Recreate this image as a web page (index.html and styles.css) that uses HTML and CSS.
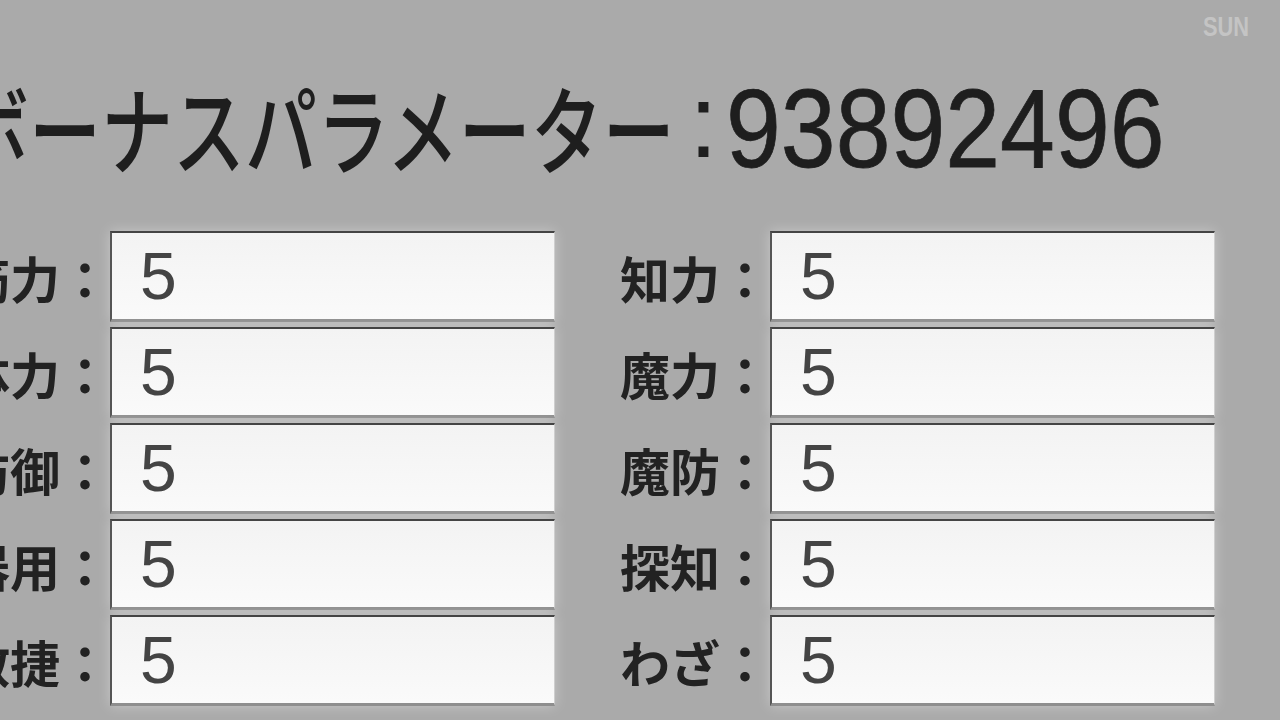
FILE: index.html
```html
<!DOCTYPE html>
<html>
  <head>
    <title>ボーナスパラメーター</title>
    <link rel="stylesheet" href="styles.css">
  </head>
  <body>
    <div class="screen">
      <div class="watermark">SUN</div>
      <header class="header">
        <h1 class="title">
          <span class="title-kana">ボーナスパラメーター</span>
          <span class="title-colon">:</span>
          <span class="title-num">93892496</span>
        </h1>
      </header>
      <div class="stats">
        <div class="stat-col">
          <div class="stat-row"><div class="stat-label">筋力：</div><div class="stat-box">5</div></div>
          <div class="stat-row"><div class="stat-label">体力：</div><div class="stat-box">5</div></div>
          <div class="stat-row"><div class="stat-label">防御：</div><div class="stat-box">5</div></div>
          <div class="stat-row"><div class="stat-label">器用：</div><div class="stat-box">5</div></div>
          <div class="stat-row"><div class="stat-label">敏捷：</div><div class="stat-box">5</div></div>
        </div>
        <div class="stat-col">
          <div class="stat-row"><div class="stat-label">知力：</div><div class="stat-box">5</div></div>
          <div class="stat-row"><div class="stat-label">魔力：</div><div class="stat-box">5</div></div>
          <div class="stat-row"><div class="stat-label">魔防：</div><div class="stat-box">5</div></div>
          <div class="stat-row"><div class="stat-label">探知：</div><div class="stat-box">5</div></div>
          <div class="stat-row"><div class="stat-label">わざ：</div><div class="stat-box">5</div></div>
        </div>
      </div>
    </div>
  </body>
</html>
```
FILE: styles.css
```css
/* Status screen, grey anime-style panel */
body {
  margin: 0;
  background-color: #aaaaaa;
  overflow: hidden;
}
.screen {
  position: relative;
  width: 1280px;
  height: 720px;
  overflow: hidden;
}
.watermark {
  position: absolute;
  top: 11px;
  right: 31px;
  font-family: "Liberation Sans", Arial, sans-serif;
  font-weight: bold;
  font-size: 28px;
  color: #c4c4c4;
  transform: scaleX(0.78);
  transform-origin: right;
}
.header {
  height: 231px;
  box-sizing: border-box;
  padding-top: 73px;
}
.title {
  display: flex;
  align-items: baseline;
  margin: 0 0 0 -43px;
  white-space: nowrap;
  color: #1e1e1e;
  font-weight: normal;
  line-height: 1;
}
.title-kana {
  width: 720px;
  font-family: "Noto Sans CJK JP", sans-serif;
  font-weight: 500;
  font-size: 96px;
  transform: scaleX(0.75);
  transform-origin: left;
}
.title-colon {
  margin-left: 12px;
  font-family: "Liberation Sans", Arial, sans-serif;
  font-size: 104px;
  transform: translateY(-10px);
}
.title-num {
  margin-left: 8px;
  font-family: "Liberation Sans", Arial, sans-serif;
  font-size: 112px;
  -webkit-text-stroke: 0.8px #1e1e1e;
  transform: scaleX(0.88);
  transform-origin: left;
}
.stats {
  display: flex;
  gap: 105px;
}
.stat-col {
  display: flex;
  flex-direction: column;
  gap: 5px;
}
.stat-row {
  display: flex;
}
.stat-label {
  width: 110px;
  display: flex;
  justify-content: flex-end;
  align-items: center;
  font-family: "Noto Sans CJK JP", sans-serif;
  font-weight: 700;
  font-size: 50px;
  color: #222;
  white-space: nowrap;
  line-height: 1;
}
.stat-box {
  width: 445px;
  height: 91px;
  box-sizing: border-box;
  display: flex;
  align-items: center;
  padding-left: 28px;
  background: linear-gradient(#f3f3f3, #fafafa);
  border-top: 2px solid #444;
  border-left: 2px solid #555;
  border-bottom: 3px solid #8e8e8e;
  border-right: 1px solid #cfcfcf;
  box-shadow: 0 0 12px rgba(255, 255, 255, 0.35);
  font-family: "Liberation Sans", Arial, sans-serif;
  font-size: 66px;
  color: #444;
  line-height: 1;
}
```
